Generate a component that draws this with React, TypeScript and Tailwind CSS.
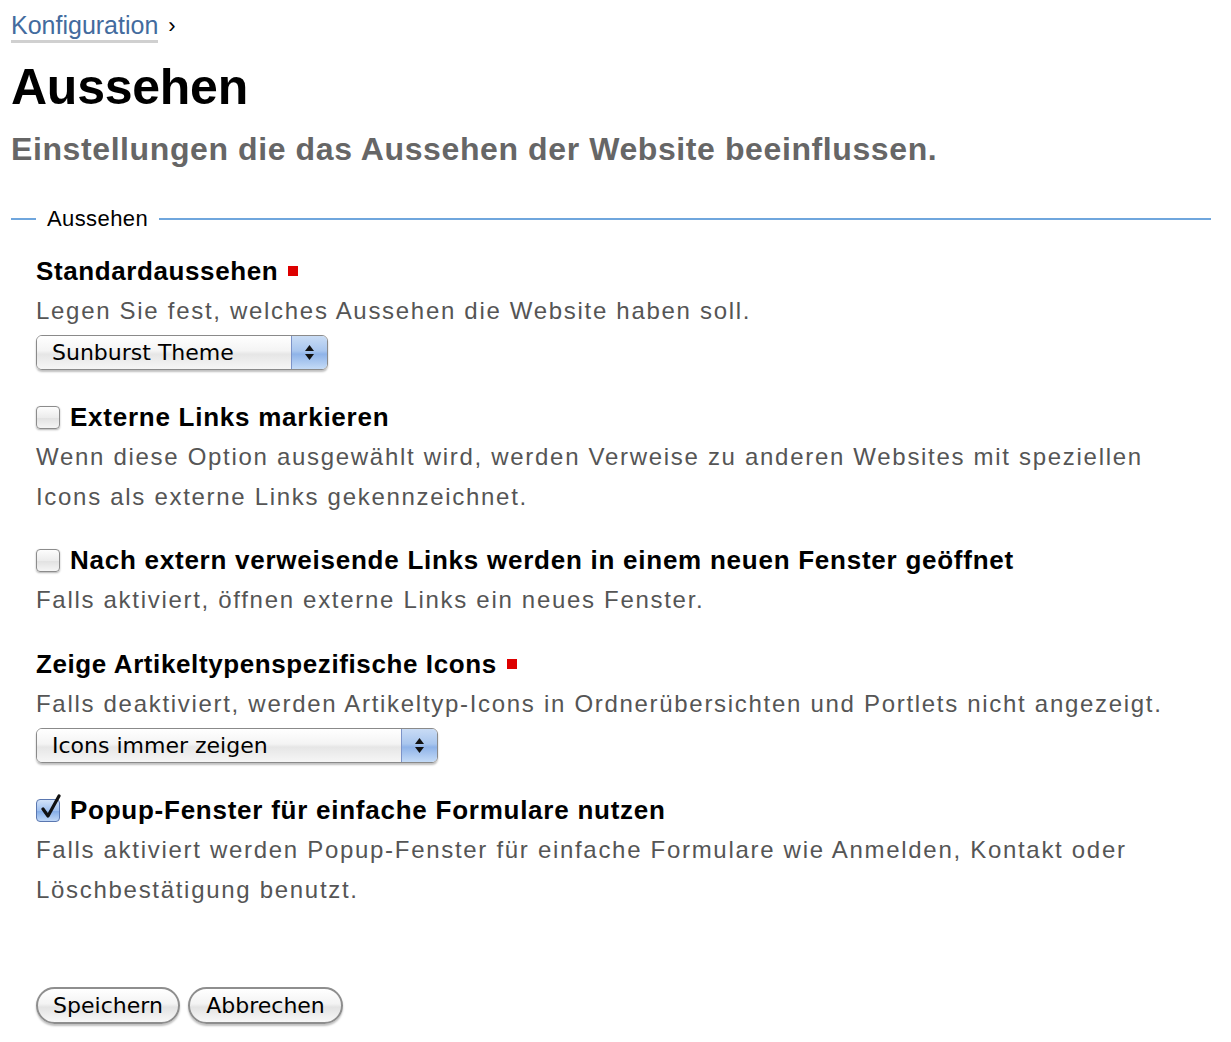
import React from "react";

const Req = () => <span className="ml-[10px] inline-block h-[10px] w-[10px] bg-[#dd0000] align-middle relative top-[-2px]" />;

function AquaSelect({ value, width }: { value: string; width: string }) {
  return (
    <div className={`flex h-[35px] ${width} overflow-hidden rounded-[6px] border border-[#8a8a8a] shadow-[0_2px_2px_rgba(0,0,0,0.25)]`}>
      <div
        className="flex flex-1 items-center bg-[linear-gradient(#ffffff_0%,#f4f4f4_45%,#e6e6e6_55%,#f6f6f6_100%)] pl-[15px] text-[22px] text-black"
        style={{ fontFamily: '"DejaVu Sans", sans-serif' }}
      >
        {value}
      </div>
      <div className="flex w-[36px] flex-col items-center justify-center gap-[3px] border-l border-[#7c93c8] bg-[linear-gradient(#c9dcf5_0%,#a9c6ee_45%,#8fb3e8_55%,#c4dbf7_100%)]">
        <svg width="9" height="6" viewBox="0 0 9 6"><path d="M4.5 0L9 6H0z" fill="#111" /></svg>
        <svg width="9" height="6" viewBox="0 0 9 6"><path d="M0 0h9L4.5 6z" fill="#111" /></svg>
      </div>
    </div>
  );
}

function Check({ checked }: { checked?: boolean }) {
  if (checked) {
    return (
      <span className="relative mr-[10px] inline-block h-[23px] w-[24px] shrink-0 rounded-[4px] border border-[#5a77b0] bg-[linear-gradient(#d3e3f9_0%,#9fc0ef_50%,#86aee8_55%,#c0d8f7_100%)]">
        <svg className="absolute left-[3px] top-[-6px]" width="22" height="26" viewBox="0 0 22 26">
          <path d="M3 15 L8 22 L19 2" fill="none" stroke="#111" strokeWidth="3.2" strokeLinecap="round" strokeLinejoin="round" />
        </svg>
      </span>
    );
  }
  return (
    <span className="mr-[10px] inline-block h-[23px] w-[24px] shrink-0 rounded-[4px] border border-[#8c8c8c] bg-[linear-gradient(#fdfdfd_0%,#ececec_50%,#e2e2e2_55%,#f5f5f5_100%)] shadow-[0_1px_2px_rgba(0,0,0,0.3)]" />
  );
}

function AquaButton({ label, w }: { label: string; w: string }) {
  return (
    <button
      className={`flex h-[37px] ${w} items-center justify-center rounded-full border-2 border-[#8e8e8e] bg-[linear-gradient(#ffffff_0%,#f3f3f3_45%,#e3e3e3_55%,#f8f8f8_100%)] text-[22px] text-black shadow-[0_2px_2px_rgba(0,0,0,0.25)]`}
      style={{ fontFamily: '"DejaVu Sans", sans-serif' }}
    >
      {label}
    </button>
  );
}

export default function App() {
  return (
    <div className="min-h-[1042px] bg-white pl-[11px] pr-[20px] pt-[8px] text-black" style={{ fontFamily: '"Liberation Sans", Arial, sans-serif' }}>
      <div className="flex items-center text-[25px] leading-[36px]">
        <a className="border-b-[3px] border-[#d0d0d0] leading-[30px] text-[#436b9e]">Konfiguration</a>
        <span className="ml-[10px] text-[22px]">›</span>
      </div>
      <h1 className="mt-[14px] text-[50px] font-bold leading-[58px] tracking-[-0.25px]">Aussehen</h1>
      <p className="mt-[13px] text-[32px] font-bold leading-[40px] text-[#666666] tracking-[0.6px]">Einstellungen die das Aussehen der Website beeinflussen.</p>

      <div className="mt-[35px] flex items-center">
        <div className="h-[2px] w-[25px] bg-[#6fa6dd]" />
        <span className="px-[11px] text-[22px] leading-[30px] tracking-[0.4px]">Aussehen</span>
        <div className="h-[2px] flex-1 bg-[#6fa6dd]" />
      </div>

      <div className="pl-[25px] text-[24px] leading-[40px]">
        <div className="mt-[17px]">
          <div className="text-[26px] font-bold tracking-[0.6px]">Standardaussehen<Req /></div>
          <div className="text-[#555555] tracking-[1.7px]">Legen Sie fest, welches Aussehen die Website haben soll.</div>
          <div className="mt-[4px]"><AquaSelect value="Sunburst Theme" width="w-[292px]" /></div>
        </div>

        <div className="mt-[27px]">
          <div className="flex items-center text-[26px] font-bold tracking-[0.75px]"><Check />Externe Links markieren</div>
          <div className="text-[#555555] tracking-[1.7px]">Wenn diese Option ausgewählt wird, werden Verweise zu anderen Websites mit speziellen<br />Icons als externe Links gekennzeichnet.</div>
        </div>

        <div className="mt-[23px]">
          <div className="flex items-center text-[26px] font-bold tracking-[0.75px]"><Check />Nach extern verweisende Links werden in einem neuen Fenster geöffnet</div>
          <div className="text-[#555555] tracking-[1.7px]">Falls aktiviert, öffnen externe Links ein neues Fenster.</div>
        </div>

        <div className="mt-[24px]">
          <div className="text-[26px] font-bold tracking-[0.6px]">Zeige Artikeltypenspezifische Icons<Req /></div>
          <div className="text-[#555555] tracking-[1.7px]">Falls deaktiviert, werden Artikeltyp-Icons in Ordnerübersichten und Portlets nicht angezeigt.</div>
          <div className="mt-[4px]"><AquaSelect value="Icons immer zeigen" width="w-[402px]" /></div>
        </div>

        <div className="mt-[27px]">
          <div className="flex items-center text-[26px] font-bold tracking-[0.75px]"><Check checked />Popup-Fenster für einfache Formulare nutzen</div>
          <div className="text-[#555555] tracking-[1.7px]">Falls aktiviert werden Popup-Fenster für einfache Formulare wie Anmelden, Kontakt oder<br />Löschbestätigung benutzt.</div>
        </div>

        <div className="mt-[77px] flex gap-[8px]">
          <AquaButton label="Speichern" w="w-[144px]" />
          <AquaButton label="Abbrechen" w="w-[155px]" />
        </div>
      </div>
    </div>
  );
}
